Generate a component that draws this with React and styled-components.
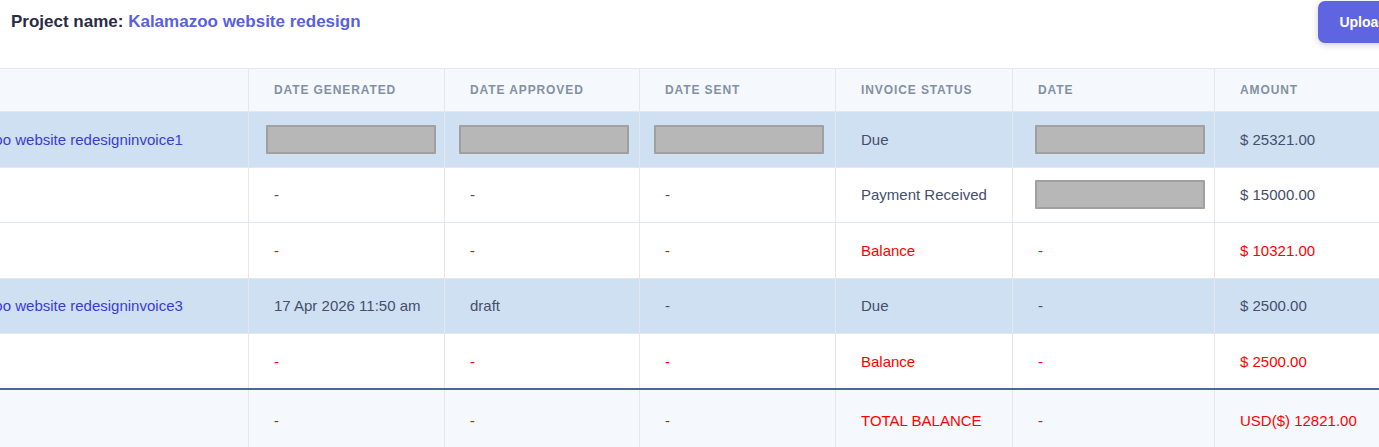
import React from 'react';
import styled, { createGlobalStyle } from 'styled-components';

const GlobalStyle = createGlobalStyle`
  html, body {
    margin: 0;
    padding: 0;
    background: #ffffff;
    overflow: hidden;
  }
  body {
    font-family: "Liberation Sans", Arial, Helvetica, sans-serif;
  }
`;

const columns = [
    { key: 'name', label: '', width: 338 },
    { key: 'generated', label: 'Date generated', width: 196 },
    { key: 'approved', label: 'Date approved', width: 195 },
    { key: 'sent', label: 'Date sent', width: 196 },
    { key: 'status', label: 'Invoice status', width: 177 },
    { key: 'date', label: 'Date', width: 202 },
    { key: 'amount', label: 'Amount', width: 200 },
];

// how far each column's placeholder box sits left of the text padding
const boxShift = [0, -8, -11, -11, 0, -3, 0];

const BOX = '__box__';

const rows = [
    {
        tone: 'highlight',
        cells: ['Kalamazoo website redesigninvoice1', BOX, BOX, BOX, 'Due', BOX, '$ 25321.00'],
    },
    {
        tone: 'plain',
        cells: ['', '-', '-', '-', 'Payment Received', BOX, '$ 15000.00'],
    },
    {
        tone: 'balance',
        cells: ['', '-', '-', '-', 'Balance', '-', '$ 10321.00'],
    },
    {
        tone: 'highlight',
        cells: ['Kalamazoo website redesigninvoice3', '17 Apr 2026 11:50 am', 'draft', '-', 'Due', '-', '$ 2500.00'],
    },
    {
        tone: 'balance',
        cells: ['', '-', '-', '-', 'Balance', '-', '$ 2500.00'],
    },
];

const totalRow = ['', '-', '-', '-', 'TOTAL BALANCE', '-', 'USD($) 12821.00'];

const App = () => {
    return (
        <Page>
            <GlobalStyle />
            <Header>
                <Title>
                    Project name: <ProjectName>Kalamazoo website redesign</ProjectName>
                </Title>
                <UploadButton type="button">Upload Invoice</UploadButton>
            </Header>
            <TableScroller>
                <Table>
                    <colgroup>
                        {columns.map((c) => (
                            <col key={c.key} style={{ width: c.width }} />
                        ))}
                    </colgroup>
                    <thead>
                        <tr>
                            {columns.map((c) => (
                                <Th key={c.key}>{c.label}</Th>
                            ))}
                        </tr>
                    </thead>
                    <tbody>
                        {rows.map((row, i) => (
                            <Row key={i} $tone={row.tone}>
                                {row.cells.map((cell, j) => (
                                    <Td key={j} $red={row.tone === 'balance'} $link={j === 0}>
                                        {cell === BOX ? <Redacted $shift={boxShift[j]} /> : cell}
                                    </Td>
                                ))}
                            </Row>
                        ))}
                        <TotalRow>
                            {totalRow.map((cell, j) => (
                                <Td key={j} $red $total>
                                    {cell}
                                </Td>
                            ))}
                        </TotalRow>
                    </tbody>
                </Table>
            </TableScroller>
        </Page>
    );
};

const Page = styled.div`
    width: 100vw;
    height: 100vh;
    overflow: hidden;
`;

const Header = styled.div`
    display: flex;
    align-items: center;
    justify-content: space-between;
    height: 44px;
    padding-left: 11px;
    margin-right: -81px;
`;

const Title = styled.h2`
    margin: 0;
    font-size: 17px;
    font-weight: 700;
    color: #2a2b45;
`;

const ProjectName = styled.span`
    color: #5a5fe2;
`;

const UploadButton = styled.button`
    height: 42px;
    padding: 0 21px;
    border: none;
    border-radius: 7px;
    background: #5f64e1;
    color: #ffffff;
    font-family: inherit;
    font-size: 14px;
    font-weight: 700;
    white-space: nowrap;
    box-shadow: 0 2px 6px rgba(60, 64, 120, 0.25);
    cursor: pointer;
`;

const TableScroller = styled.div`
    margin-top: 24px;
    overflow: hidden;
`;

const Table = styled.table`
    margin-left: -90px;
    border-collapse: collapse;
    table-layout: fixed;
    width: 1504px;
`;

const Th = styled.th`
    height: 43px;
    padding: 0 0 0 25px;
    box-sizing: border-box;
    background: #f5f8fc;
    border-top: 1px solid #e3e7ee;
    border-bottom: 1px solid #e3e7ee;
    border-left: 1px solid #e3e7ee;
    text-align: left;
    font-size: 12px;
    font-weight: 700;
    letter-spacing: 0.9px;
    text-transform: uppercase;
    color: #8390a4;
`;

const Row = styled.tr`
    background: ${({ $tone }) => ($tone === 'highlight' ? '#cfe0f2' : '#ffffff')};
`;

const TotalRow = styled.tr`
    background: #f5f8fc;
    border-top: 2px solid #4b6995;
`;

const Td = styled.td`
    height: ${({ $total }) => ($total ? '62px' : '55.5px')};
    padding: 0 0 0 25px;
    box-sizing: border-box;
    border-bottom: 1px solid #e3e7ee;
    border-left: 1px solid #e3e7ee;
    font-size: 15px;
    white-space: nowrap;
    overflow: hidden;
    color: ${({ $red, $link }) => ($link ? '#3a3dd4' : $red ? '#ff0000' : '#454e6c')};
`;

const Redacted = styled.div`
    width: 170px;
    height: 29px;
    margin-left: ${({ $shift }) => $shift}px;
    box-sizing: border-box;
    background: #b7b7b7;
    border: 2px solid #a0a0a0;
    border-radius: 1px;
`;

export default App;
